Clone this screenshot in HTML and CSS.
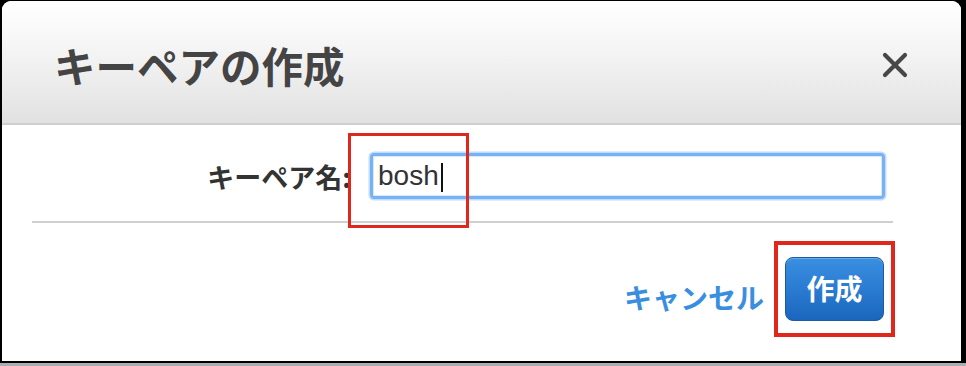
FILE: index.html
```html
<!DOCTYPE html>
<html lang="ja">
<head>
    <meta charset="UTF-8">
    <title>キーペアの作成</title>
    <link rel="stylesheet" href="styles.css">
</head>
<body>
    <div class="dialog">
        <div class="dialog-header">
            <h1 class="dialog-title">キーペアの作成</h1>
            <svg class="close" width="28" height="28" viewBox="0 0 28 28">
                <path d="M4 4 L24 24 M24 4 L4 24" stroke="#474747" stroke-width="4.2" stroke-linecap="round"/>
            </svg>
        </div>

        <div class="form-row">
            <label class="form-label">キーペア名:</label>
            <div class="text-input">bosh<span class="caret"></span></div>
        </div>

        <div class="divider"></div>

        <div class="dialog-footer">
            <a class="link-cancel">キャンセル</a>
            <button class="btn-create">作成</button>
        </div>

        <!-- annotation boxes -->
        <div class="mark mark-input"></div>
        <div class="mark mark-button"></div>
    </div>
    <div class="desk"></div>
</body>
</html>
```

FILE: styles.css
```css
* {
    margin: 0;
    padding: 0;
    box-sizing: border-box;
}

body {
    background: #000;
    height: 366px;
    overflow: hidden;
    padding: 1px 5px 0 2px;
    font-family: 'Liberation Sans', 'Noto Sans CJK JP', sans-serif;
}

.dialog {
    position: relative;
    height: 360px;
    background: #fff;
    border-radius: 9px 9px 0 0;
    overflow: hidden;
}

.dialog-header {
    height: 124px;
    display: flex;
    align-items: center;
    justify-content: space-between;
    padding: 6px 52px 0 52px;
    background: linear-gradient(to bottom, #ffffff 0%, #f3f3f3 45%, #e1e1e1 100%);
    border-bottom: 2px solid #cfcfcf;
}

.dialog-title {
    font-family: 'Noto Sans CJK JP', sans-serif;
    font-size: 41.5px;
    font-weight: 700;
    color: #444;
}

.close {
    display: block;
}

.form-row {
    display: flex;
    align-items: center;
    gap: 20px;
    margin-top: 28px;
}

.form-label {
    width: 349px;
    text-align: right;
    font-family: 'Noto Sans CJK JP', sans-serif;
    font-size: 27px;
    font-weight: 700;
    color: #333;
}

.text-input {
    width: 515px;
    height: 46px;
    display: flex;
    align-items: center;
    padding-left: 5px;
    margin-left: -1px;
    border: 3px solid #78b2f5;
    border-radius: 4px;
    box-shadow: 0 0 0 1.5px #c2dcfb, inset 0 0 0 1px #d6e8fc;
    font-family: 'Liberation Sans', Arial, sans-serif;
    font-size: 28px;
    color: #333;
}

.caret {
    display: inline-block;
    width: 2px;
    height: 29px;
    margin-left: 2px;
    margin-top: 2px;
    background: #111;
}

.divider {
    height: 2px;
    background: #d0d0d0;
    margin: 22px 68px 0 30px;
}

.dialog-footer {
    display: flex;
    justify-content: flex-end;
    align-items: center;
    gap: 21px;
    margin-top: 34px;
    padding-right: 77px;
}

.link-cancel {
    font-family: 'Noto Sans CJK JP', sans-serif;
    font-size: 28px;
    font-weight: 700;
    color: #3a8ee0;
    margin-top: 15px;
}

.btn-create {
    width: 99px;
    height: 64px;
    border: 1px solid #1a5aa6;
    border-radius: 8px;
    background: linear-gradient(to bottom, #3a8fe0 0%, #2a7bd2 50%, #1b66bd 100%);
    box-shadow: inset 0 1px 0 rgba(255, 255, 255, 0.25);
    color: #fff;
    font-family: 'Noto Sans CJK JP', sans-serif;
    font-size: 28px;
    font-weight: 700;
    padding-bottom: 2px;
}

.mark {
    position: absolute;
    border: 3px solid #e0271c;
}

.mark-input {
    left: 346px;
    top: 132px;
    width: 121px;
    height: 95px;
}

.mark-button {
    left: 772px;
    top: 240px;
    width: 121px;
    height: 96px;
    border-width: 4px;
}

.desk {
    height: 3px;
    margin: 2px -5px 0 -2px;
    background: #a9aeb3;
}
```
